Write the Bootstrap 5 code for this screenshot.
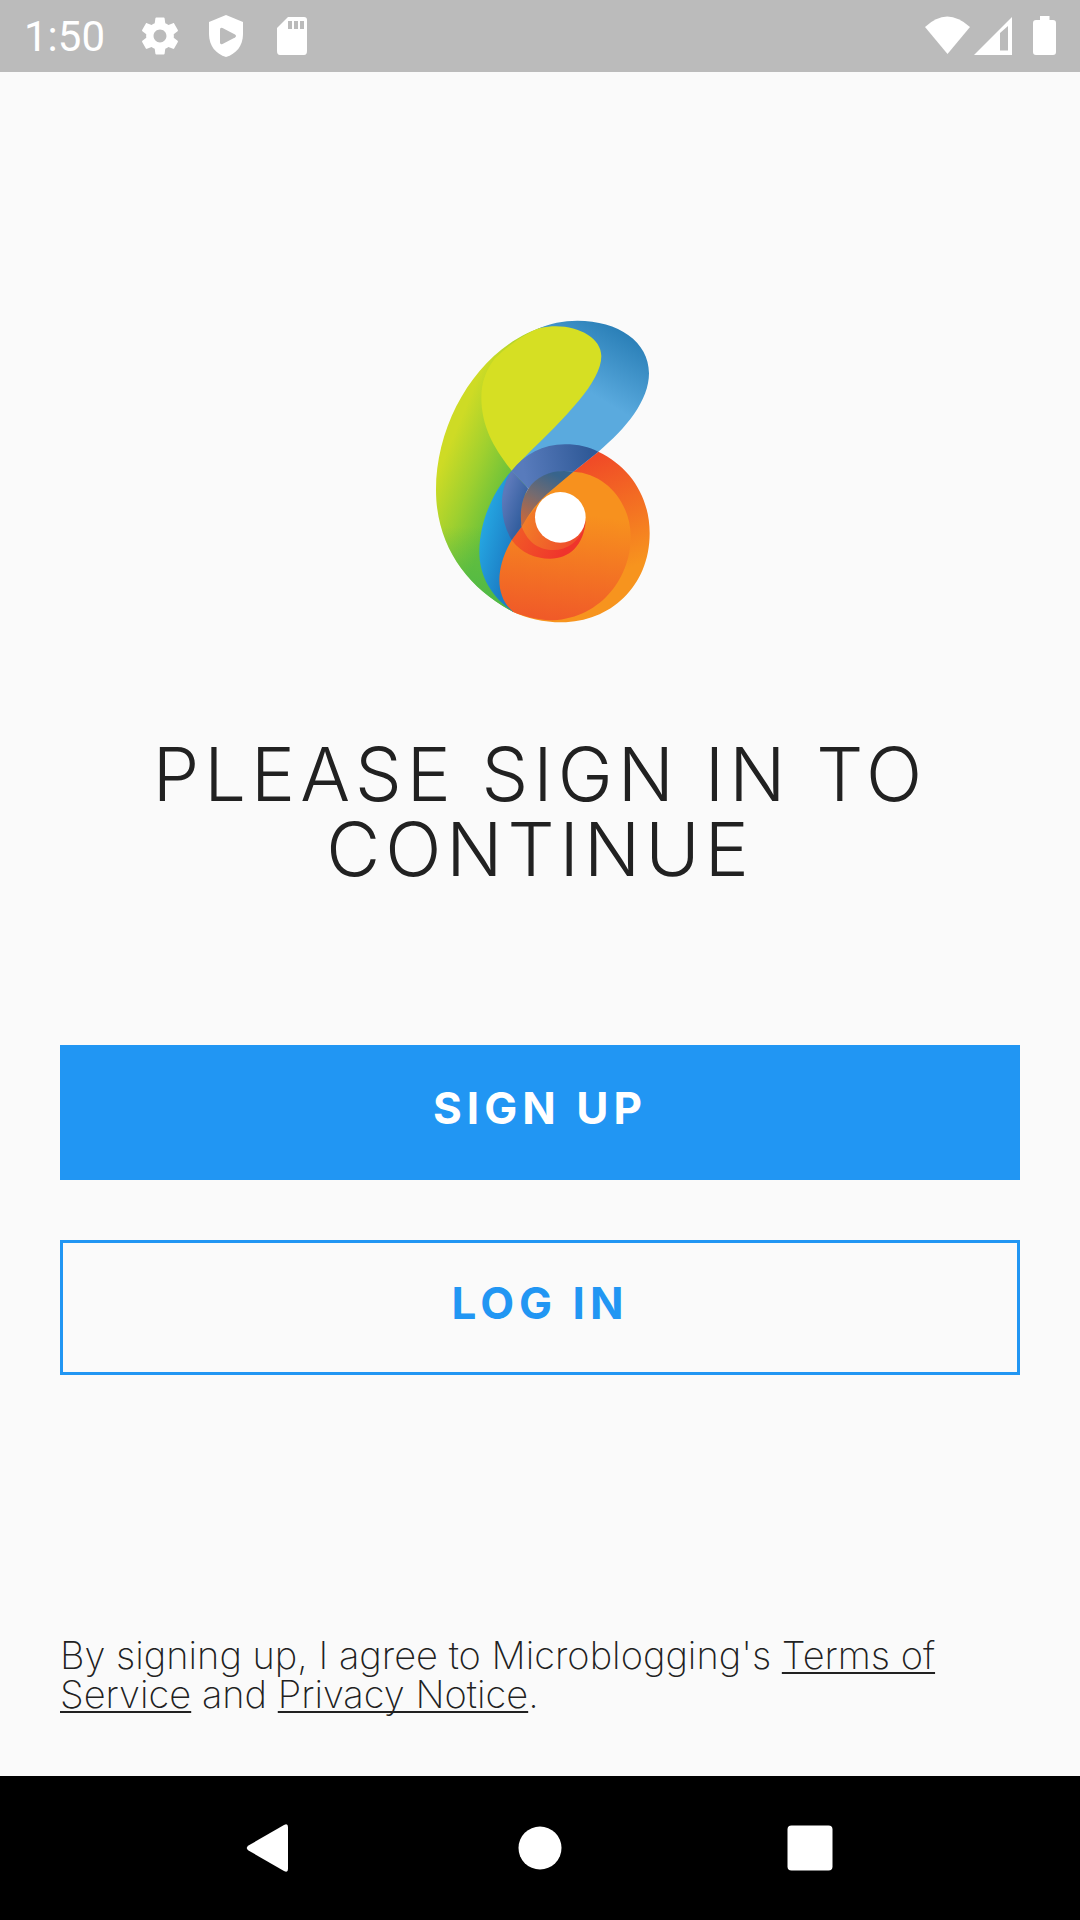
<!DOCTYPE html>
<html lang="en">
<head>
<meta charset="utf-8">
<meta name="viewport" content="width=device-width, initial-scale=1">
<title>Sign in</title>
<link href="https://cdn.jsdelivr.net/npm/bootstrap@5.3.0/dist/css/bootstrap.min.css" rel="stylesheet">
<style>
  body { background: #fafafa; color: #212121; font-family: Inter, Lato, sans-serif; }
  .status-bar { background: #bbb; height: 72px; padding: 0 24px; font: 400 42px/72px Roboto, sans-serif; }
  .status-bar span { padding-top: 2px; }
  .status-bar svg { display: block; }
  .status-icons { margin-left: 31px; gap: 18px; }
  .welcome { padding: 248px 60px 62px; }
  .headline { margin-top: 115px; font-size: 74px; line-height: 75px; font-weight: 300; letter-spacing: 5px; }
  .actions { margin-top: 158px; gap: 60px; }
  .auth-btn { --bs-btn-border-width: 3px; --bs-btn-border-radius: 0; --bs-btn-font-size: 44px; --bs-btn-font-weight: 700;
    --bs-btn-color: #2196f3; --bs-btn-border-color: #2196f3; --bs-btn-hover-bg: #1e88e5; --bs-btn-hover-border-color: #1e88e5; --bs-btn-hover-color: #fff;
    --bs-btn-padding-y: 0; height: 135px; padding-bottom: 10px; letter-spacing: 5px; }
  .auth-fill { --bs-btn-bg: #2196f3; --bs-btn-color: #fff; }
  .legal { font-size: 38px; line-height: 39px; font-weight: 200; }
  .legal a { color: inherit; text-decoration-thickness: 2px; text-underline-offset: 3px; text-decoration-skip-ink: none; }
  .nav-keys { background: #000; height: 144px; padding: 0 135px; }
</style>
</head>
<body>
<div class="d-flex flex-column min-vh-100">
  <header class="status-bar d-flex align-items-center text-white">
    <span>1:50</span>
    <div class="status-icons d-flex align-items-center">
      <svg width="48" height="48" viewBox="-1 -1 26 26" fill="#fff"><path d="M19.43 12.98c.04-.32.07-.64.07-.98s-.03-.66-.07-.98l2.11-1.65c.19-.15.24-.42.12-.64l-2-3.46c-.12-.22-.39-.3-.61-.22l-2.49 1c-.52-.4-1.08-.73-1.69-.98l-.38-2.65C14.46 2.18 14.25 2 14 2h-4c-.25 0-.46.18-.49.42l-.38 2.65c-.61.25-1.17.59-1.69.98l-2.49-1c-.23-.09-.49 0-.61.22l-2 3.46c-.13.22-.07.49.12.64l2.11 1.65c-.04.32-.07.65-.07.98s.03.66.07.98l-2.11 1.65c-.19.15-.24.42-.12.64l2 3.46c.12.22.39.3.61.22l2.49-1c.52.4 1.08.73 1.69.98l.38 2.65c.03.24.24.42.49.42h4c.25 0 .46-.18.49-.42l.38-2.65c.61-.25 1.17-.59 1.69-.98l2.49 1c.23.09.49 0 .61-.22l2-3.46c.12-.22.07-.49-.12-.64l-2.11-1.65zM12 15.5c-1.930 0-3.500-1.570-3.500-3.500s1.570-3.500 3.500-3.500 3.500 1.570 3.500 3.500-1.570 3.500-3.500 3.500z"/></svg>
      <svg width="48" height="48" viewBox="0 0 48 48"><path fill="#fff" d="M24 3 41 10V22C41 34 34 42 24 45 14 42 7 34 7 22V10Z"/><path fill="#bbb" d="M18 17.500Q18 15 20.500 16L33 22.500Q35 24 33 25.500L20.500 32Q18 33 18 30.500Z"/></svg>
      <svg width="48" height="48" viewBox="0 0 48 48"><path fill="#fff" d="M20 5H36Q39 5 39 8V39Q39 43 36 43H12Q9 43 9 39V16Z"/><path fill="#bbb" d="M20 9h4v8h-4zM26 9h4v8h-4zM32 9h4v8h-4z"/></svg>
    </div>
    <svg class="ms-auto" width="134" height="72" viewBox="922 0 134 72"><path fill="#fff" d="M925 27Q947 6 970 27L947.500 54Z"/><path fill="#fff" fill-rule="evenodd" d="M974 55 1012 17V55ZM1000 33V50.500H1008V26Z"/><path fill="#fff" d="M1040 16h9.500v4H1053q3 0 3 3V52q0 3-3 3H1036q-3 0-3-3V23q0-3 3-3h4z"/></svg>
  </header>

  <main class="welcome flex-grow-1 d-flex flex-column">
    <svg class="align-self-center" width="222" height="302" viewBox="27 60 666 906" overflow="visible" role="img" aria-label="Microblogging">
      <defs>
        <linearGradient id="leaf" gradientUnits="userSpaceOnUse" x1="70" y1="480" x2="260" y2="560"><stop stop-color="#cedb25"/><stop offset=".5" stop-color="#9fd02f"/><stop offset="1" stop-color="#6ac13a"/></linearGradient>
        <linearGradient id="leafEnd" x1="0" y1="0" x2="0" y2="1"><stop offset=".7" stop-color="#4cb848" stop-opacity="0"/><stop offset="1" stop-color="#4cb848"/></linearGradient>
        <linearGradient id="sky" gradientUnits="userSpaceOnUse" x1="640" y1="110" x2="530" y2="290"><stop stop-color="#2a7fb7"/><stop offset="1" stop-color="#5aaade"/></linearGradient>
        <linearGradient id="wave" gradientUnits="userSpaceOnUse" x1="180" y1="710" x2="275" y2="735"><stop stop-color="#25a5e1"/><stop offset="1" stop-color="#1c7fc6"/></linearGradient>
        <linearGradient id="rim" gradientUnits="userSpaceOnUse" x1="510" y1="480" x2="640" y2="800"><stop stop-color="#f04b27"/><stop offset="1" stop-color="#f7941e"/></linearGradient>
        <linearGradient id="disc" gradientUnits="userSpaceOnUse" x1="460" y1="640" x2="420" y2="960"><stop stop-color="#f7911e"/><stop offset="1" stop-color="#f05a28"/></linearGradient>
        <linearGradient id="arcTop" gradientUnits="userSpaceOnUse" x1="310" y1="500" x2="510" y2="470"><stop stop-color="#587bbc"/><stop offset="1" stop-color="#305a98"/></linearGradient>
        <linearGradient id="arcLeft" gradientUnits="userSpaceOnUse" x1="246" y1="600" x2="315" y2="625"><stop stop-color="#5c79ba"/><stop offset="1" stop-color="#345f9f"/></linearGradient>
        <linearGradient id="smoke" gradientUnits="userSpaceOnUse" x1="400" y1="520" x2="325" y2="665"><stop stop-color="#37648c"/><stop offset=".5" stop-color="#746b70"/><stop offset="1" stop-color="#bf6841"/></linearGradient>
        <linearGradient id="ember" gradientUnits="userSpaceOnUse" x1="300" y1="690" x2="430" y2="760"><stop stop-color="#f15727"/><stop offset="1" stop-color="#ef342c"/></linearGradient>
        <linearGradient id="lip" gradientUnits="userSpaceOnUse" x1="310" y1="680" x2="450" y2="740"><stop stop-color="#f27b27"/><stop offset="1" stop-color="#ef4f2c"/></linearGradient>
      </defs>
      <path fill="url(#leaf)" d="M380 78C190 130 48 350 48 570C48 740 145 865 280 936L320 560 400 300Z"/>
      <path fill="url(#leafEnd)" d="M380 78C190 130 48 350 48 570C48 740 145 865 280 936L320 560 400 300Z"/>
      <path fill="url(#sky)" d="M350 88C390 70 430 62 472 62C595 62 687 125 687 220C687 300 620 385 535 455L460 515 360 600 275 512 315 470Z"/>
      <path fill="#d6df23" d="M225 175C270 130 325 95 360 84C450 63 544 105 544 168C544 245 440 348 315 470L275 512C222 445 184 380 184 292C184 250 197 210 225 175Z"/>
      <path fill="url(#wave)" d="M275 512C215 580 178 670 178 755C178 835 220 895 280 936L320 900 340 640Z"/>
      <path fill="url(#rim)" d="M535 455C630 500 689 590 689 700C689 860 570 967 425 967C370 967 320 954 280 936L350 600 460 515Z"/>
      <path fill="url(#disc)" d="M460 515C560 520 632 610 632 710C632 840 535 961 385 961C345 957 308 948 280 936C225 890 225 805 275 720Q340 600 460 515Z"/>
      <path fill="url(#ember)" d="M305 680L275 720C305 760 345 776 390 776C448 776 492 735 497 662L420 700Z"/>
      <path fill="url(#lip)" d="M350 620Q325 645 305 680C325 730 360 750 400 750C442 750 478 724 493 680L420 650Z"/>
      <path fill="url(#arcTop)" d="M275 512C315 462 368 433 435 433C475 433 508 441 535 455L460 515C405 510 358 525 325 566Z"/>
      <path fill="url(#arcLeft)" d="M275 512L325 566C304 596 299 640 305 680L275 720C254 685 246 648 246 610C246 573 256 540 275 512Z"/>
      <path fill="url(#smoke)" d="M325 566C353 523 405 506 460 515L380 583Q338 621 305 680C299 636 304 597 325 566Z"/>
      <circle cx="421" cy="652" r="76" fill="#fff"/>
    </svg>

    <h1 class="headline text-center text-uppercase mb-0">Please sign in to continue</h1>

    <div class="actions d-flex flex-column">
      <button type="button" class="btn auth-btn auth-fill text-uppercase">Sign up</button>
      <button type="button" class="btn auth-btn text-uppercase">Log in</button>
    </div>

    <p class="legal mt-auto mb-0">By signing up, I agree to Microblogging's <a href="#terms">Terms of Service</a> and <a href="#privacy">Privacy Notice</a>.</p>
  </main>

  <nav class="nav-keys d-flex" aria-label="System">
    <button type="button" class="btn border-0 p-0 flex-fill" aria-label="Back"><svg width="48" height="48" viewBox="0 0 48 48"><path fill="#fff" d="M2.500 21.500 38 1Q42 -1 42 3V45Q42 49 38 47L2.500 26.500Q-1 24 2.500 21.500Z"/></svg></button>
    <button type="button" class="btn border-0 p-0 flex-fill" aria-label="Home"><svg width="48" height="48" viewBox="0 0 48 48"><circle cx="24" cy="24" r="21.500" fill="#fff"/></svg></button>
    <button type="button" class="btn border-0 p-0 flex-fill" aria-label="Recent apps"><svg width="48" height="48" viewBox="0 0 48 48"><rect x="1.500" y="1.500" width="45" height="45" rx="4" fill="#fff"/></svg></button>
  </nav>
</div>
<script src="https://cdn.jsdelivr.net/npm/bootstrap@5.3.0/dist/js/bootstrap.bundle.min.js"></script>
</body>
</html>
